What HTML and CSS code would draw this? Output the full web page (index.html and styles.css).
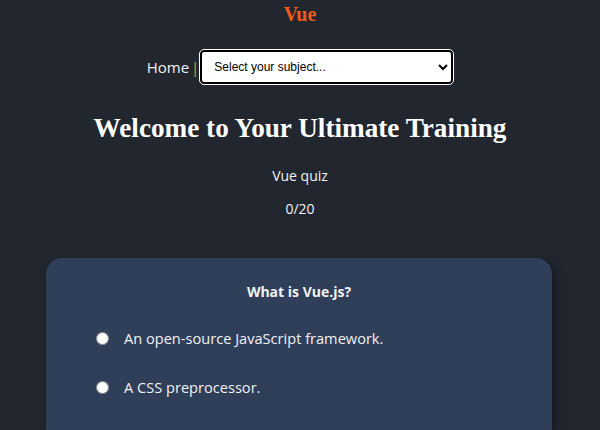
FILE: index.html
```html
<!DOCTYPE html>
<html>
<head>
<meta charset="utf-8">
<link rel="stylesheet" href="styles.css">
</head>
<body>
<header class="brand">Vue</header>
<nav class="nav">
  <a class="home">Home</a><span class="sep">|</span>
  <select class="subject">
    <option>Select your subject...</option>
  </select>
</nav>
<h1 class="title">Welcome to Your Ultimate Training</h1>
<p class="quiz-name">Vue quiz</p>
<p class="score">0/20</p>
<section class="card">
  <h2 class="question">What is Vue.js?</h2>
  <label class="option"><input type="radio" name="q"><span>An open-source JavaScript framework.</span></label>
  <label class="option"><input type="radio" name="q"><span>A CSS preprocessor.</span></label>
</section>
</body>
</html>
```
FILE: styles.css
```css
html, body {
  margin: 0;
  padding: 0;
}
body {
  background: #22262f;
  color: #f2f2f2;
  font-family: "Open Sans", "Liberation Sans", sans-serif;
  width: 600px;
  height: 430px;
  overflow: hidden;
}
.brand {
  text-align: center;
  font-family: "Liberation Serif", serif;
  font-weight: bold;
  font-size: 20px;
  color: #f05a1a;
  padding-top: 3px;
  height: 26px;
}
.nav {
  display: flex;
  justify-content: center;
  align-items: center;
  margin-top: 21px;
  height: 34px;
}
.home {
  font-size: 15px;
  color: #f2f2f2;
}
.sep {
  color: #d8a23a;
  font-size: 15px;
  margin: 0 1px 0 2px;
}
.subject {
  width: 253px;
  height: 34px;
  font-family: "Liberation Sans", Arial, sans-serif;
  font-size: 12px;
  color: #000;
  background: #fff;
  border: 2px solid #000;
  outline: 1px solid #fff;
  border-radius: 4px;
  padding: 0 8px;
}
.title {
  margin: 26px 0 0;
  text-align: center;
  font-family: "Liberation Serif", serif;
  font-weight: bold;
  font-size: 27.2px;
  color: #fff;
  line-height: 36px;
}
.quiz-name {
  margin: 20px 0 0;
  text-align: center;
  font-size: 14px;
  line-height: 20px;
}
.score {
  margin: 13px 0 0;
  text-align: center;
  font-size: 14px;
  line-height: 20px;
}
.card {
  margin: 39px 48px 0 46px;
  background: #2f3e59;
  border-radius: 16px 16px 0 0;
  box-shadow: 3px 3px 8px rgba(0,0,0,0.4);
  padding: 24px 0 0 50px;
  height: 148px;
}
.question {
  margin: 0 0 0 -50px;
  text-align: center;
  font-size: 14px;
  font-weight: bold;
  line-height: 20px;
}
.option {
  display: flex;
  align-items: center;
  gap: 15px;
  font-size: 14.6px;
  margin-top: 26px;
  height: 20px;
}
.option + .option {
  margin-top: 29px;
}
.option input {
  margin: 0;
  width: 13px;
  height: 13px;
  accent-color: #fff;
}
```
